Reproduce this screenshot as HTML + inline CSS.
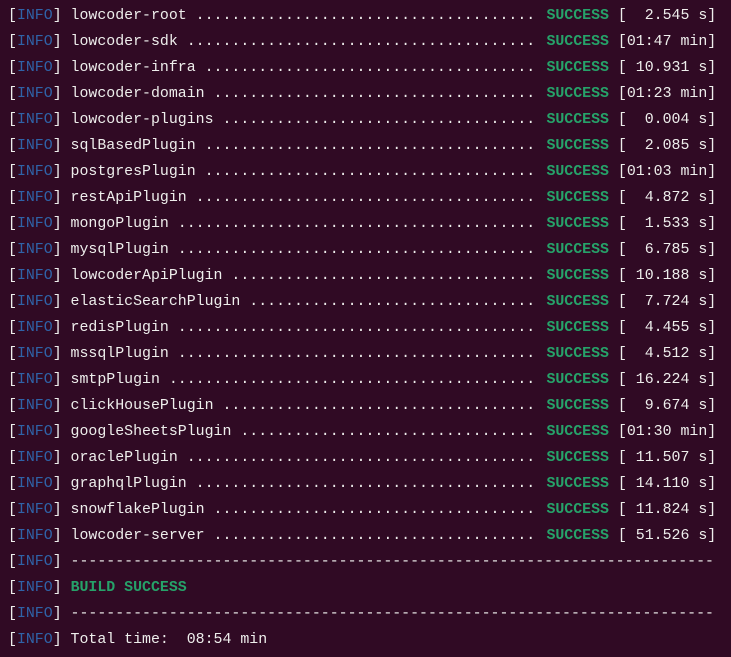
<!DOCTYPE html>
<html><head><meta charset="utf-8"><style>
html,body{margin:0;padding:0;background:#300a24;width:731px;height:657px;overflow:hidden}
.t{position:absolute;left:8px;top:3px;font-family:"Liberation Mono","DejaVu Sans Mono",monospace;font-size:14.9px;color:#eeeeec}
.r{position:relative;height:26px;line-height:26px;white-space:pre}
.l{display:inline-block;width:529.5px;overflow:hidden;vertical-align:top}
.s{position:absolute;left:529.5px;top:0;white-space:pre}
.i{color:#2f63a8}
.g{color:#26a269;font-weight:bold}
</style></head><body><div class="t">
<div class="r"><span class="l">[<span class="i">INFO</span>] lowcoder-root ...............................................</span><span class="s"> <span class="g">SUCCESS</span> [  2.545 s]</span></div>
<div class="r"><span class="l">[<span class="i">INFO</span>] lowcoder-sdk ...............................................</span><span class="s"> <span class="g">SUCCESS</span> [01:47 min]</span></div>
<div class="r"><span class="l">[<span class="i">INFO</span>] lowcoder-infra ...............................................</span><span class="s"> <span class="g">SUCCESS</span> [ 10.931 s]</span></div>
<div class="r"><span class="l">[<span class="i">INFO</span>] lowcoder-domain ...............................................</span><span class="s"> <span class="g">SUCCESS</span> [01:23 min]</span></div>
<div class="r"><span class="l">[<span class="i">INFO</span>] lowcoder-plugins ...............................................</span><span class="s"> <span class="g">SUCCESS</span> [  0.004 s]</span></div>
<div class="r"><span class="l">[<span class="i">INFO</span>] sqlBasedPlugin ...............................................</span><span class="s"> <span class="g">SUCCESS</span> [  2.085 s]</span></div>
<div class="r"><span class="l">[<span class="i">INFO</span>] postgresPlugin ...............................................</span><span class="s"> <span class="g">SUCCESS</span> [01:03 min]</span></div>
<div class="r"><span class="l">[<span class="i">INFO</span>] restApiPlugin ...............................................</span><span class="s"> <span class="g">SUCCESS</span> [  4.872 s]</span></div>
<div class="r"><span class="l">[<span class="i">INFO</span>] mongoPlugin ...............................................</span><span class="s"> <span class="g">SUCCESS</span> [  1.533 s]</span></div>
<div class="r"><span class="l">[<span class="i">INFO</span>] mysqlPlugin ...............................................</span><span class="s"> <span class="g">SUCCESS</span> [  6.785 s]</span></div>
<div class="r"><span class="l">[<span class="i">INFO</span>] lowcoderApiPlugin ...............................................</span><span class="s"> <span class="g">SUCCESS</span> [ 10.188 s]</span></div>
<div class="r"><span class="l">[<span class="i">INFO</span>] elasticSearchPlugin ...............................................</span><span class="s"> <span class="g">SUCCESS</span> [  7.724 s]</span></div>
<div class="r"><span class="l">[<span class="i">INFO</span>] redisPlugin ...............................................</span><span class="s"> <span class="g">SUCCESS</span> [  4.455 s]</span></div>
<div class="r"><span class="l">[<span class="i">INFO</span>] mssqlPlugin ...............................................</span><span class="s"> <span class="g">SUCCESS</span> [  4.512 s]</span></div>
<div class="r"><span class="l">[<span class="i">INFO</span>] smtpPlugin ...............................................</span><span class="s"> <span class="g">SUCCESS</span> [ 16.224 s]</span></div>
<div class="r"><span class="l">[<span class="i">INFO</span>] clickHousePlugin ...............................................</span><span class="s"> <span class="g">SUCCESS</span> [  9.674 s]</span></div>
<div class="r"><span class="l">[<span class="i">INFO</span>] googleSheetsPlugin ...............................................</span><span class="s"> <span class="g">SUCCESS</span> [01:30 min]</span></div>
<div class="r"><span class="l">[<span class="i">INFO</span>] oraclePlugin ...............................................</span><span class="s"> <span class="g">SUCCESS</span> [ 11.507 s]</span></div>
<div class="r"><span class="l">[<span class="i">INFO</span>] graphqlPlugin ...............................................</span><span class="s"> <span class="g">SUCCESS</span> [ 14.110 s]</span></div>
<div class="r"><span class="l">[<span class="i">INFO</span>] snowflakePlugin ...............................................</span><span class="s"> <span class="g">SUCCESS</span> [ 11.824 s]</span></div>
<div class="r"><span class="l">[<span class="i">INFO</span>] lowcoder-server ...............................................</span><span class="s"> <span class="g">SUCCESS</span> [ 51.526 s]</span></div>
<div class="r">[<span class="i">INFO</span>] ------------------------------------------------------------------------</div>
<div class="r">[<span class="i">INFO</span>] <span class="g">BUILD SUCCESS</span></div>
<div class="r">[<span class="i">INFO</span>] ------------------------------------------------------------------------</div>
<div class="r">[<span class="i">INFO</span>] Total time:  08:54 min</div>
</div></body></html>
